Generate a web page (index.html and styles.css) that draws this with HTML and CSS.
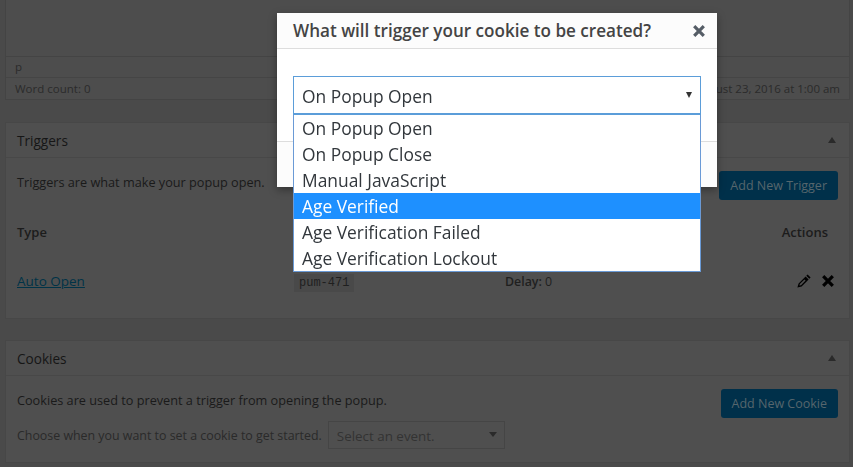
FILE: index.html
```html
<!DOCTYPE html>
<html lang="en">
<head>
    <meta charset="UTF-8">
    <meta name="viewport" content="width=device-width, initial-scale=1.0">
    <title>Edit Popup</title>
    <link rel="stylesheet" href="styles.css">
</head>
<body>
    <div class="page">
        <div class="editor">
            <div class="editor-area"></div>
            <div class="editor-path">p</div>
            <div class="editor-status">
                <span>Word count: 0</span>
                <span>August 23, 2016 at 1:00 am</span>
            </div>
        </div>

        <div class="box box-triggers">
            <div class="box-header">
                <h2>Triggers</h2>
                <span class="caret-up"></span>
            </div>
            <div class="box-body">
                <div class="intro">
                    <p>Triggers are what make your popup open.</p>
                    <button class="btn">Add New Trigger</button>
                </div>
                <div class="table-row table-head">
                    <div class="col-type">Type</div>
                    <div class="col-actions">Actions</div>
                </div>
                <div class="table-row">
                    <div class="col-type"><a href="#">Auto Open</a></div>
                    <div class="col-cookie"><code>pum-471</code></div>
                    <div class="col-settings"><b>Delay:</b> 0</div>
                    <div class="col-actions col-icons">
                        <svg class="icon" viewBox="0 0 14 14"><path d="M10.6 .4 13.6 3.4 12.3 4.7 9.3 1.7Z M8.6 2.4 11.6 5.4 4.6 12.4 .4 13.6 1.6 9.4Z M2.8 10 2.4 11.6 4 11.2 8.6 6.6 7.4 5.4Z" fill-rule="evenodd"/></svg>
                        <svg class="icon" viewBox="0 0 14 14"><path class="cross" d="M2.2 2.2 11.8 11.8 M11.8 2.2 2.2 11.8"/></svg>
                    </div>
                </div>
            </div>
        </div>

        <div class="box box-cookies">
            <div class="box-header">
                <h2>Cookies</h2>
                <span class="caret-up"></span>
            </div>
            <div class="box-body">
                <div class="intro">
                    <div>
                        <p>Cookies are used to prevent a trigger from opening the popup.</p>
                        <div class="choose">
                            <span>Choose when you want to set a cookie to get started.</span>
                            <div class="event-select">Select an event.<span class="caret-down"></span></div>
                        </div>
                    </div>
                    <button class="btn">Add New Cookie</button>
                </div>
            </div>
        </div>
    </div>

    <div class="overlay">
        <div class="modal">
            <div class="modal-header">
                <h3>What will trigger your cookie to be created?</h3>
                <svg class="modal-close" viewBox="0 0 14 14"><path class="cross" d="M2.2 2.2 11.8 11.8 M11.8 2.2 2.2 11.8"/></svg>
            </div>
            <div class="modal-body">
                <div class="select">
                    <div class="select-current">On Popup Open<span class="select-arrow"></span></div>
                    <ul class="select-list">
                        <li>On Popup Open</li>
                        <li>On Popup Close</li>
                        <li>Manual JavaScript</li>
                        <li class="active">Age Verified</li>
                        <li>Age Verification Failed</li>
                        <li>Age Verification Lockout</li>
                    </ul>
                </div>
            </div>
            <div class="modal-footer"></div>
        </div>
    </div>
</body>
</html>
```

FILE: styles.css
```css
html, body {
    height: 100%;
}
body {
    margin: 0;
    background: #4a4a4a;
    color: #1f1f1f;
    font-family: "Open Sans", sans-serif;
    font-size: 12.4px;
    overflow: hidden;
}
.page {
    padding: 0 3px 0 5px;
}
.editor {
    border: 1px solid #444;
    border-top: none;
    background: #4d4d4d;
    color: #2b2b2b;
    font-size: 11.5px;
}
.editor-area {
    height: 56px;
    border-bottom: 1px solid #444;
}
.editor-path {
    height: 20px;
    line-height: 20px;
    padding-left: 9px;
    border-bottom: 1px solid #454545;
}
.editor-status {
    display: flex;
    justify-content: space-between;
    height: 21px;
    line-height: 22px;
    padding: 0 9px;
}
.box {
    background: #4f4f4f;
    border: 1px solid #474747;
}
.box-triggers {
    margin-top: 22px;
    height: 195px;
}
.box-cookies {
    margin-top: 21px;
    height: 121px;
}
.box-header {
    display: flex;
    justify-content: space-between;
    align-items: center;
    height: 34px;
    padding: 0 13px 0 11px;
    border-bottom: 1px solid #484848;
}
h2 {
    margin: 0;
    font-size: 13.6px;
    font-weight: 400;
    color: #161616;
}
.caret-up {
    width: 0;
    height: 0;
    border-left: 4px solid transparent;
    border-right: 4px solid transparent;
    border-bottom: 6px solid #2a2a2a;
}
.box-body {
    padding: 0 11px;
}
.intro {
    display: flex;
    justify-content: space-between;
    align-items: flex-start;
    padding-top: 13px;
}
.intro p {
    margin: 0;
    padding-top: 2px;
    line-height: 18px;
    font-size: 12.7px;
    color: #1a1a1a;
}
.btn {
    height: 29px;
    padding: 0 11px;
    border: none;
    border-radius: 3px;
    background: #00304a;
    color: #56666d;
    font-family: inherit;
    font-size: 12.5px;
}
.table-row {
    display: flex;
    align-items: center;
    height: 50px;
}
.table-head {
    margin-top: 8px;
    height: 48px;
    font-size: 13px;
    font-weight: 600;
    color: #1c1c1c;
}
.col-type {
    width: 277px;
}
.col-cookie {
    width: 211px;
}
.col-settings {
    flex: 1;
}
.col-settings b {
    font-weight: 600;
}
.col-actions {
    margin-left: auto;
    display: flex;
    justify-content: flex-end;
    align-items: center;
    gap: 10px;
    padding-right: 10px;
}
.col-icons {
    padding-right: 3px;
}
.col-type a {
    font-size: 13.5px;
    color: #003347;
}
code {
    padding: 2px 5px;
    background: #494949;
    font-family: "Liberation Mono", monospace;
    font-size: 12px;
    color: #1f1f1f;
}
.icon {
    width: 14px;
    height: 14px;
    fill: #000;
}
.cross {
    fill: none;
    stroke: currentColor;
    stroke-width: 3.2;
}
.icon .cross {
    stroke: #000;
}
.choose {
    display: flex;
    align-items: center;
    gap: 6px;
    margin-top: 12px;
    color: #2a2a2a;
}
.event-select {
    position: relative;
    width: 177px;
    height: 28px;
    line-height: 28px;
    padding-left: 8px;
    border: 1px solid #454545;
    color: #333;
    box-sizing: border-box;
    font-size: 13.4px;
}
.caret-down {
    position: absolute;
    top: 10px;
    right: 7px;
    border-left: 4px solid transparent;
    border-right: 4px solid transparent;
    border-top: 5px solid #2a2a2a;
}

/* popup over the dimmed page */
.overlay {
    position: fixed;
    top: 0;
    right: 0;
    bottom: 0;
    left: 0;
    display: flex;
    align-items: flex-start;
    padding: 13px 0 0 277px;
    box-sizing: border-box;
}
.modal {
    width: 440px;
    height: 174px;
    background: #fff;
    color: #444;
    box-shadow: 0 3px 8px rgba(0, 0, 0, 0.35);
    display: flex;
    flex-direction: column;
}
.modal-header {
    display: flex;
    justify-content: space-between;
    align-items: center;
    height: 35px;
    padding: 0 11px 0 16px;
    background: #fcfcfc;
    border-bottom: 1px solid #ddd;
}
h3 {
    margin: 0;
    font-size: 17.1px;
    font-weight: 600;
    color: #444;
}
.modal-close {
    width: 14px;
    height: 14px;
    color: #555d66;
}
.modal-body {
    flex: 1;
    padding: 27px 16px 0;
}
.select {
    position: relative;
}
.select-current {
    position: relative;
    height: 39px;
    line-height: 39px;
    padding-left: 8px;
    border: 1px solid #5b9dd9;
    border-bottom-width: 2px;
    box-sizing: border-box;
    font-size: 17.4px;
    color: #32373c;
}
.select-arrow {
    position: absolute;
    top: 15px;
    right: 8px;
    border-left: 3px solid transparent;
    border-right: 3px solid transparent;
    border-top: 6px solid #333;
}
.select-list {
    position: absolute;
    left: 0;
    right: 0;
    top: 39px;
    margin: 0;
    padding: 0;
    list-style: none;
    background: #fff;
    border: 1px solid #6a9ad6;
    border-top: none;
    font-size: 17.4px;
    color: #32373c;
}
.select-list li {
    height: 26px;
    line-height: 26px;
    padding-left: 8px;
}
.select-list .active {
    background: #1e90ff;
    color: #fff;
}
.modal-footer {
    height: 45px;
    background: #fcfcfc;
    border-top: 1px solid #ddd;
}
```
